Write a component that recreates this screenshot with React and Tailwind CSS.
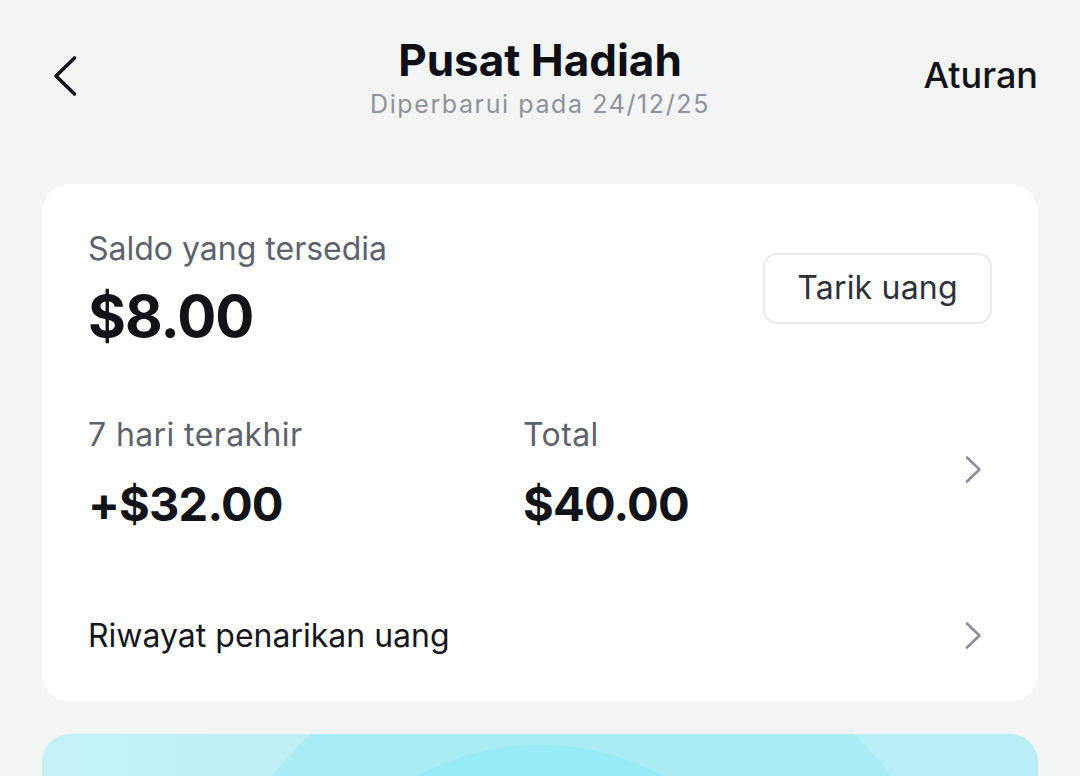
import React from "react";

const ChevronRight = () => (
  <svg width="20" height="30" viewBox="0 0 20 30" fill="none">
    <path d="M3 2.5 L15.5 14.5 L3 26.5" stroke="#8b9099" strokeWidth="2.6" strokeLinecap="round" strokeLinejoin="round" />
  </svg>
);

const App = () => {
  return (
    <div
      className="min-h-screen w-full bg-[#f3f4f4] overflow-hidden"
      style={{ fontFamily: "Inter, 'Noto Sans', sans-serif" }}
    >
      {/* header */}
      <div className="grid grid-cols-[1fr_auto_1fr] items-start px-[42px] pt-[36px]">
        <button className="justify-self-start mt-[19px] ml-[11px]">
          <svg width="26" height="42" viewBox="0 0 26 42" fill="none">
            <path d="M21.5 3 L3 21 L21.5 39" stroke="#111318" strokeWidth="3.6" strokeLinecap="round" strokeLinejoin="round" />
          </svg>
        </button>
        <div className="flex flex-col items-center">
          <h1 className="text-[44px] leading-[48px] font-bold text-[#0d0f14]">Pusat Hadiah</h1>
          <p className="mt-[4px] text-[25px] leading-[32px] text-[#8d929b] tracking-[1.6px]">Diperbarui pada 24/12/25</p>
        </div>
        <button className="justify-self-end mt-[17px] text-[36px] leading-[44px] font-medium text-[#111318]">
          Aturan
        </button>
      </div>

      {/* balance card */}
      <div className="mx-[42px] mt-[64px] rounded-[28px] bg-white px-[46px] pt-[47px] pb-[48px]">
        <div className="flex items-center justify-between">
          <div>
            <p className="text-[32px] leading-[36px] text-[#5d626c]">Saldo yang tersedia</p>
            <p className="mt-[20px] text-[58px] leading-[58px] font-bold text-[#111318] tracking-[-1px]">$8.00</p>
          </div>
          <button className="h-[71px] w-[229px] rounded-[14px] border-2 border-[#e8eaeb] text-[32px] tracking-[0.2px] text-[#2e3138]">
            Tarik uang
          </button>
        </div>

        <div className="mt-[72px] flex items-center">
          <div className="w-[435px]">
            <p className="text-[32px] leading-[36px] text-[#5d626c] tracking-[0.4px]">7 hari terakhir</p>
            <p className="mt-[26px] text-[47px] leading-[50px] font-bold text-[#111318] tracking-[-0.8px]">+$32.00</p>
          </div>
          <div className="flex-1">
            <p className="text-[32px] leading-[36px] text-[#5d626c] tracking-[0.4px]">Total</p>
            <p className="mt-[26px] text-[47px] leading-[50px] font-bold text-[#111318] tracking-[-0.8px]">$40.00</p>
          </div>
          <div className="mr-[8px] mb-[6px]">
            <ChevronRight />
          </div>
        </div>

        <div className="mt-[89px] flex items-center justify-between">
          <p className="text-[32px] leading-[36px] text-[#15171c]">Riwayat penarikan uang</p>
          <div className="mr-[8px]">
            <ChevronRight />
          </div>
        </div>
      </div>

      {/* promo card */}
      <div className="relative mx-[42px] mt-[32px] h-[300px] overflow-hidden rounded-[28px] bg-gradient-to-r from-[#c3f1f7] via-[#b9eff6] to-[#b8eff7]">
        <div className="absolute left-[143px] top-[-107px] h-[794px] w-[794px] rounded-full bg-[#a9ecf4]" />
        <div className="absolute left-[238px] top-[11px] h-[520px] w-[520px] rounded-full bg-[#97ebf4]" />
      </div>
    </div>
  );
};

export default App;
